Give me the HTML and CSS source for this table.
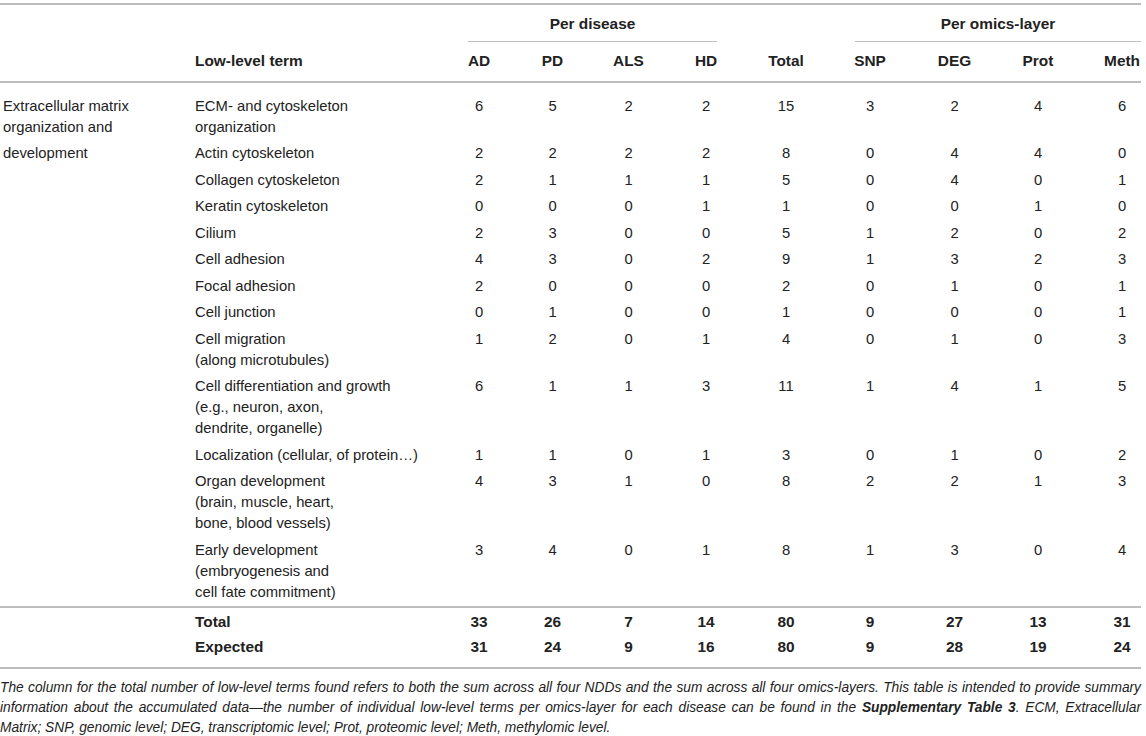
FILE: index.html
```html
<!DOCTYPE html>
<html lang="en">
<head>
<meta charset="utf-8">
<title>Table</title>
<link rel="stylesheet" href="styles.css">
</head>
<body>
<div class="page">
<table class="data">
  <colgroup>
    <col class="w-cat"><col class="w-term">
    <col class="w-ad"><col class="w-pd"><col class="w-als"><col class="w-hd">
    <col class="w-total">
    <col class="w-snp"><col class="w-deg"><col class="w-prot"><col class="w-meth">
  </colgroup>
  <thead>
    <tr class="group-row">
      <th class="cat"></th>
      <th class="term"></th>
      <th colspan="4" class="group"><div class="group-label g-disease">Per disease</div></th>
      <th></th>
      <th colspan="4" class="group"><div class="group-label g-omics">Per omics-layer</div></th>
    </tr>
    <tr class="head-row">
      <th class="cat"></th>
      <th class="term">Low-level term</th>
      <th>AD</th><th>PD</th><th>ALS</th><th>HD</th>
      <th>Total</th>
      <th>SNP</th><th>DEG</th><th>Prot</th><th class="meth">Meth</th>
    </tr>
  </thead>
  <tbody>
    <tr class="first">
      <td class="cat">Extracellular matrix<br>organization and</td>
      <td class="term">ECM- and cytoskeleton<br>organization</td>
      <td>6</td><td>5</td><td>2</td><td>2</td><td>15</td><td>3</td><td>2</td><td>4</td><td class="meth">6</td>
    </tr>
    <tr>
      <td class="cat">development</td>
      <td class="term">Actin cytoskeleton</td>
      <td>2</td><td>2</td><td>2</td><td>2</td><td>8</td><td>0</td><td>4</td><td>4</td><td class="meth">0</td>
    </tr>
    <tr>
      <td class="cat"></td>
      <td class="term">Collagen cytoskeleton</td>
      <td>2</td><td>1</td><td>1</td><td>1</td><td>5</td><td>0</td><td>4</td><td>0</td><td class="meth">1</td>
    </tr>
    <tr>
      <td class="cat"></td>
      <td class="term">Keratin cytoskeleton</td>
      <td>0</td><td>0</td><td>0</td><td>1</td><td>1</td><td>0</td><td>0</td><td>1</td><td class="meth">0</td>
    </tr>
    <tr>
      <td class="cat"></td>
      <td class="term">Cilium</td>
      <td>2</td><td>3</td><td>0</td><td>0</td><td>5</td><td>1</td><td>2</td><td>0</td><td class="meth">2</td>
    </tr>
    <tr>
      <td class="cat"></td>
      <td class="term">Cell adhesion</td>
      <td>4</td><td>3</td><td>0</td><td>2</td><td>9</td><td>1</td><td>3</td><td>2</td><td class="meth">3</td>
    </tr>
    <tr>
      <td class="cat"></td>
      <td class="term">Focal adhesion</td>
      <td>2</td><td>0</td><td>0</td><td>0</td><td>2</td><td>0</td><td>1</td><td>0</td><td class="meth">1</td>
    </tr>
    <tr>
      <td class="cat"></td>
      <td class="term">Cell junction</td>
      <td>0</td><td>1</td><td>0</td><td>0</td><td>1</td><td>0</td><td>0</td><td>0</td><td class="meth">1</td>
    </tr>
    <tr>
      <td class="cat"></td>
      <td class="term">Cell migration<br>(along microtubules)</td>
      <td>1</td><td>2</td><td>0</td><td>1</td><td>4</td><td>0</td><td>1</td><td>0</td><td class="meth">3</td>
    </tr>
    <tr>
      <td class="cat"></td>
      <td class="term">Cell differentiation and growth<br>(e.g., neuron, axon,<br>dendrite, organelle)</td>
      <td>6</td><td>1</td><td>1</td><td>3</td><td>11</td><td>1</td><td>4</td><td>1</td><td class="meth">5</td>
    </tr>
    <tr>
      <td class="cat"></td>
      <td class="term">Localization (cellular, of protein…)</td>
      <td>1</td><td>1</td><td>0</td><td>1</td><td>3</td><td>0</td><td>1</td><td>0</td><td class="meth">2</td>
    </tr>
    <tr>
      <td class="cat"></td>
      <td class="term">Organ development<br>(brain, muscle, heart,<br>bone, blood vessels)</td>
      <td>4</td><td>3</td><td>1</td><td>0</td><td>8</td><td>2</td><td>2</td><td>1</td><td class="meth">3</td>
    </tr>
    <tr class="last">
      <td class="cat"></td>
      <td class="term">Early development<br>(embryogenesis and<br>cell fate commitment)</td>
      <td>3</td><td>4</td><td>0</td><td>1</td><td>8</td><td>1</td><td>3</td><td>0</td><td class="meth">4</td>
    </tr>
  </tbody>
  <tfoot>
    <tr class="sum">
      <td class="cat"></td>
      <td class="term">Total</td>
      <td>33</td><td>26</td><td>7</td><td>14</td><td>80</td><td>9</td><td>27</td><td>13</td><td class="meth">31</td>
    </tr>
    <tr class="expected">
      <td class="cat"></td>
      <td class="term">Expected</td>
      <td>31</td><td>24</td><td>9</td><td>16</td><td>80</td><td>9</td><td>28</td><td>19</td><td class="meth">24</td>
    </tr>
  </tfoot>
</table>
<p class="caption"><span class="cap-line">The column for the total number of low-level terms found refers to both the sum across all four NDDs and the sum across all four omics-layers. This table is intended to provide summary</span> <span class="cap-line">information about the accumulated data—the number of individual low-level terms per omics-layer for each disease can be found in the <b>Supplementary Table 3</b>. ECM, Extracellular</span> <span class="cap-last">Matrix; SNP, genomic level; DEG, transcriptomic level; Prot, proteomic level; Meth, methylomic level.</span></p>
</div>
</body>
</html>
```
FILE: styles.css
```css
html, body {
  margin: 0;
  padding: 0;
  background: #ffffff;
}

body {
  font-family: "Liberation Sans", Arial, Helvetica, sans-serif;
  color: #222222;
}

.page {
  width: 1141px;
  padding-top: 3px;
}

.data {
  width: 1141px;
  table-layout: fixed;
  border-collapse: collapse;
  border-spacing: 0;
  font-size: 14.8px;
  line-height: 21px;
}

.w-cat { width: 190px; }
.w-term { width: 253px; }
.w-ad { width: 72px; }
.w-pd { width: 75px; }
.w-als { width: 77px; }
.w-hd { width: 78px; }
.w-total { width: 82px; }
.w-snp { width: 86px; }
.w-deg { width: 83px; }
.w-prot { width: 84px; }
.w-meth { width: 61px; }

.data th,
.data td {
  padding: 3px 0 2.5px 0;
  text-align: center;
  vertical-align: top;
  font-weight: normal;
}

.data th {
  font-weight: bold;
  font-size: 15.4px;
}

.data .cat {
  text-align: left;
  padding-left: 3px;
}

.data .term {
  text-align: left;
  padding-left: 5px;
}

.data .meth {
  padding-left: 23px;
}

.data thead tr.group-row th {
  border-top: 2px solid #bdbdbd;
  padding-top: 8px;
  padding-bottom: 0;
}

.group-label {
  padding-bottom: 7px;
  border-bottom: 1.5px solid #bdbdbd;
}

.g-disease {
  margin-left: 25px;
  margin-right: 28px;
}

.g-omics {
  margin-left: 28px;
  margin-right: 0;
}

.data thead tr.head-row th {
  padding-top: 8px;
  padding-bottom: 10px;
  border-bottom: 2px solid #bdbdbd;
}

.data tbody tr.first td {
  padding-top: 12.5px;
}

.data tbody tr.last td {
  padding-bottom: 3px;
}

.data tfoot td {
  font-weight: bold;
  font-size: 15.4px;
}

.data tfoot tr.sum td {
  border-top: 2px solid #bdbdbd;
  padding-top: 3px;
  padding-bottom: 1px;
}

.data tfoot tr.expected td {
  padding-top: 3px;
  padding-bottom: 10.5px;
  border-bottom: 2px solid #bdbdbd;
}

.caption {
  margin: 9px 0 0 0;
  font-style: italic;
  font-size: 13.75px;
  line-height: 20px;
}

.cap-line {
  display: block;
  white-space: nowrap;
  text-align: justify;
  text-align-last: justify;
}

.cap-last {
  display: block;
  white-space: nowrap;
  text-align: left;
}

.caption b {
  font-weight: bold;
}
```
